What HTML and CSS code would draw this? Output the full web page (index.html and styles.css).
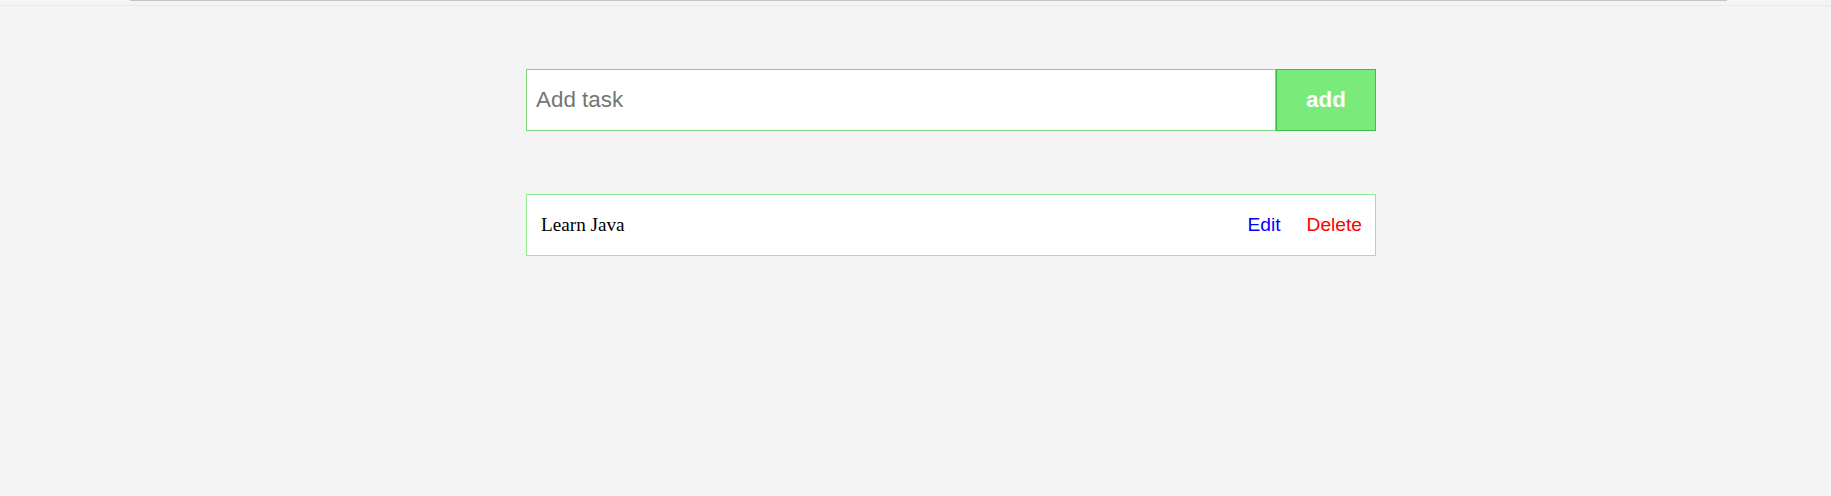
FILE: index.html
```html
<!DOCTYPE html>
<html>
<head>
<meta charset="utf-8">
<link rel="stylesheet" href="styles.css">
</head>
<body>
<div class="topbar"><div class="topbar-line"></div></div>
<div class="app">
  <form class="task-form">
    <input class="task-input" type="text" placeholder="Add task">
    <button class="add-btn" type="button">add</button>
  </form>
  <ul class="task-list">
    <li class="task-item">
      <span class="task-name">Learn Java</span>
      <span class="task-actions">
        <span class="edit">Edit</span>
        <span class="delete">Delete</span>
      </span>
    </li>
  </ul>
</div>
</body>
</html>
```
FILE: styles.css
```css
html, body {
  margin: 0;
  padding: 0;
  background: #f4f4f4;
}
.topbar {
  height: 5px;
  border-bottom: 1px solid #e9e9e9;
}
.topbar-line {
  margin-left: 130px;
  width: 1597px;
  height: 1px;
  background: #c4c4c4;
}
.app {
  width: 850px;
  margin-left: 526px;
  padding-top: 63px;
}
.task-form {
  display: flex;
  height: 62px;
  margin: 0;
}
.task-input {
  flex: 1;
  box-sizing: border-box;
  height: 62px;
  margin: 0;
  border: 1px solid #7dd67d;
  background: #fff;
  padding: 0 0 0 9px;
  font-family: "Liberation Sans", Arial, sans-serif;
  font-size: 22.4px;
  color: #333;
  outline: none;
}
.task-input::placeholder {
  color: #757575;
}
.add-btn {
  width: 100px;
  height: 62px;
  box-sizing: border-box;
  margin: 0;
  border: 1px solid #3cbf3c;
  background: #7aea7a;
  color: #fff;
  font-family: "Liberation Sans", Arial, sans-serif;
  font-weight: bold;
  font-size: 22.4px;
  padding: 0;
}
.task-list {
  list-style: none;
  margin: 63px 0 0 0;
  padding: 0;
}
.task-item {
  box-sizing: border-box;
  height: 62px;
  border: 1px solid #90ee90;
  background: #fff;
  display: flex;
  align-items: center;
  justify-content: space-between;
  padding: 0 13px 0 14px;
}
.task-name {
  font-family: "Liberation Serif", "Times New Roman", serif;
  font-size: 19.2px;
  color: #000;
}
.task-actions {
  display: flex;
  gap: 26px;
  font-family: "Liberation Sans", Arial, sans-serif;
  font-size: 19.2px;
}
.edit {
  color: #0000ff;
}
.delete {
  color: #ff0000;
}
```
